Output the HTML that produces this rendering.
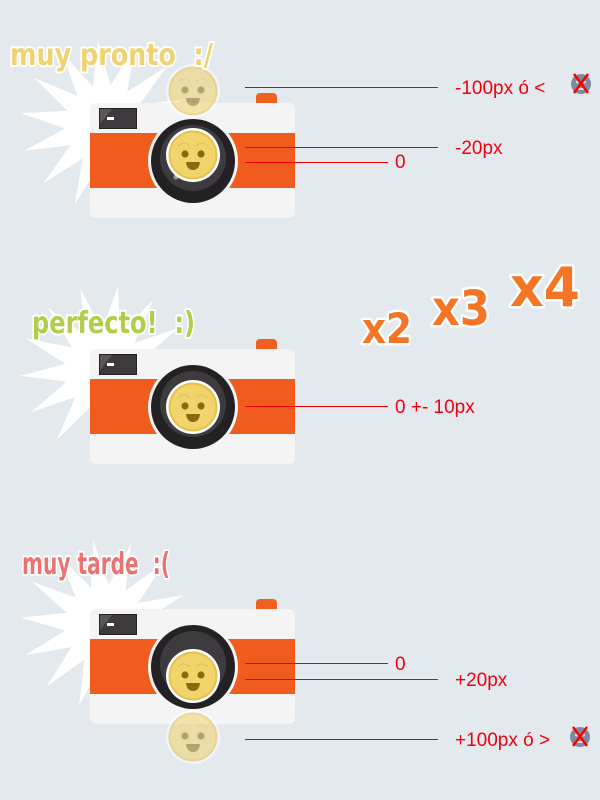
<!DOCTYPE html>
<html><head><meta charset="utf-8"><style>
html,body{margin:0;padding:0;background:#e4e9ee;}
svg{display:block}
.lbl{font-family:"Liberation Sans",sans-serif;font-size:19px;fill:#f00010;}
.big{font-family:"DejaVu Sans","Liberation Sans",sans-serif;font-weight:bold;stroke:#fff;stroke-width:4;paint-order:stroke;stroke-linejoin:round;white-space:pre;}
.mult{font-family:"DejaVu Sans","Liberation Sans",sans-serif;font-weight:bold;fill:#f47523;stroke:#fff;stroke-width:5;paint-order:stroke;stroke-linejoin:round;}
</style></head><body>
<svg width="600" height="800" viewBox="0 0 600 800" xmlns="http://www.w3.org/2000/svg" xml:space="preserve">
<defs>
<polygon id="star" fill="#fff" points="85,0 39,8.9 76.6,36.9 31.3,24.9 53,66.5 17.4,36 18.9,82.9 0,40 -18.9,82.9 -17.4,36 -53,66.5 -31.3,24.9 -76.6,36.9 -39,8.9 -85,0 -39,-8.9 -76.6,-36.9 -31.3,-24.9 -53,-66.5 -17.4,-36 -18.9,-82.9 0,-40 18.9,-82.9 17.4,-36 53,-66.5 31.3,-24.9 76.6,-36.9 39,-8.9"/>
<g id="cam">
<rect x="256" y="93" width="21" height="14" rx="4" fill="#f06020"/>
<rect x="90" y="103" width="205" height="115" rx="6" fill="#f4f4f4"/>
<rect x="90" y="133" width="205" height="55" fill="#f05c1e"/>
<rect x="99" y="108" width="38" height="21" fill="#222"/>
<rect x="100" y="109" width="36" height="19" fill="#3d393d"/>
<polygon points="100,109 112,109 100,124" fill="#5a5659"/>
<rect x="107" y="117" width="7" height="3" fill="#fff"/>
<circle cx="193" cy="161" r="45" fill="#f4f4f4"/>
<circle cx="193" cy="161" r="42" fill="#232123"/>
<circle cx="193" cy="158" r="33" fill="#3e3b3e"/>
<circle cx="176" cy="177" r="2.5" fill="#999"/>
</g>
<g id="face">
<circle r="27" fill="#fff"/>
<circle r="24.5" fill="#e6c14e"/>
<circle r="22.5" fill="#f1d46a"/>
<path d="M-15,-9 Q-9,-15 -3,-9 M3,-9 Q9,-15 15,-9" stroke="#e4c25a" stroke-width="1.2" fill="none"/>
<circle cx="-8" cy="-1" r="3.6" fill="#8a6a10"/>
<circle cx="8" cy="-1" r="3.6" fill="#8a6a10"/>
<path d="M-7,7 L7,7 Q6,15 0,15 Q-6,15 -7,7 Z" fill="#8a6a10"/>
</g>
<g id="nope">
<circle r="10" fill="#7e8aa0"/>
<circle cx="-3.5" cy="-2" r="1.5" fill="#dde"/>
<circle cx="3.5" cy="-2" r="1.5" fill="#dde"/>
<rect x="-4" y="4" width="8" height="2" fill="#dde"/>
<path d="M-7,-10 L7,9 M7,-10 L-7,9" stroke="#f00" stroke-width="2.5"/>
</g>
</defs>

<use href="#star" transform="translate(105,125) rotate(8)"/>
<use href="#cam"/>
<use href="#face" transform="translate(193,155)"/>
<g opacity="0.55"><use href="#face" transform="translate(193,91)"/></g>
<text x="10" y="65" class="big" font-size="30" fill="#f0d272" textLength="203" lengthAdjust="spacingAndGlyphs">muy pronto  :/</text>
<line x1="245" y1="87.5" x2="438" y2="87.5" stroke="#e00" stroke-width="1"/>
<line x1="245" y1="147.5" x2="438" y2="147.5" stroke="#e00" stroke-width="1"/>
<line x1="245" y1="162.5" x2="388" y2="162.5" stroke="#e00" stroke-width="1"/>
<text x="455" y="94" class="lbl">-100px ó &lt;</text>
<use href="#nope" transform="translate(581,84)"/>
<text x="455" y="154" class="lbl">-20px</text>
<text x="395" y="168" class="lbl">0</text>

<use href="#star" transform="translate(105,370) rotate(-4)"/>
<use href="#cam" transform="translate(0,246)"/>
<use href="#face" transform="translate(193,407)"/>
<text x="32" y="333" class="big" font-size="30" fill="#b3cd4a" textLength="163" lengthAdjust="spacingAndGlyphs">perfecto!  :)</text>
<line x1="245" y1="406.5" x2="388" y2="406.5" stroke="#e00" stroke-width="1"/>
<text x="395" y="413" class="lbl">0 +- 10px</text>
<text x="362" y="343" class="mult" font-size="42" textLength="50" lengthAdjust="spacingAndGlyphs">x2</text>
<text x="432" y="325" class="mult" font-size="48" textLength="58" lengthAdjust="spacingAndGlyphs">x3</text>
<text x="510" y="306" class="mult" font-size="54" textLength="70" lengthAdjust="spacingAndGlyphs">x4</text>

<use href="#star" transform="translate(105,625) rotate(5)"/>
<use href="#cam" transform="translate(0,506)"/>
<use href="#face" transform="translate(193,676)"/>
<g opacity="0.55"><use href="#face" transform="translate(193,737)"/></g>
<text x="22" y="574" class="big" font-size="30" fill="#e97373" textLength="148" lengthAdjust="spacingAndGlyphs">muy tarde  :(</text>
<line x1="245" y1="663.5" x2="388" y2="663.5" stroke="#e00" stroke-width="1"/>
<line x1="245" y1="679.5" x2="438" y2="679.5" stroke="#e00" stroke-width="1"/>
<line x1="245" y1="739.5" x2="438" y2="739.5" stroke="#e00" stroke-width="1"/>
<text x="395" y="670" class="lbl">0</text>
<text x="455" y="686" class="lbl">+20px</text>
<text x="455" y="746" class="lbl">+100px ó &gt;</text>
<use href="#nope" transform="translate(580,737)"/>
</svg>
</body></html>
